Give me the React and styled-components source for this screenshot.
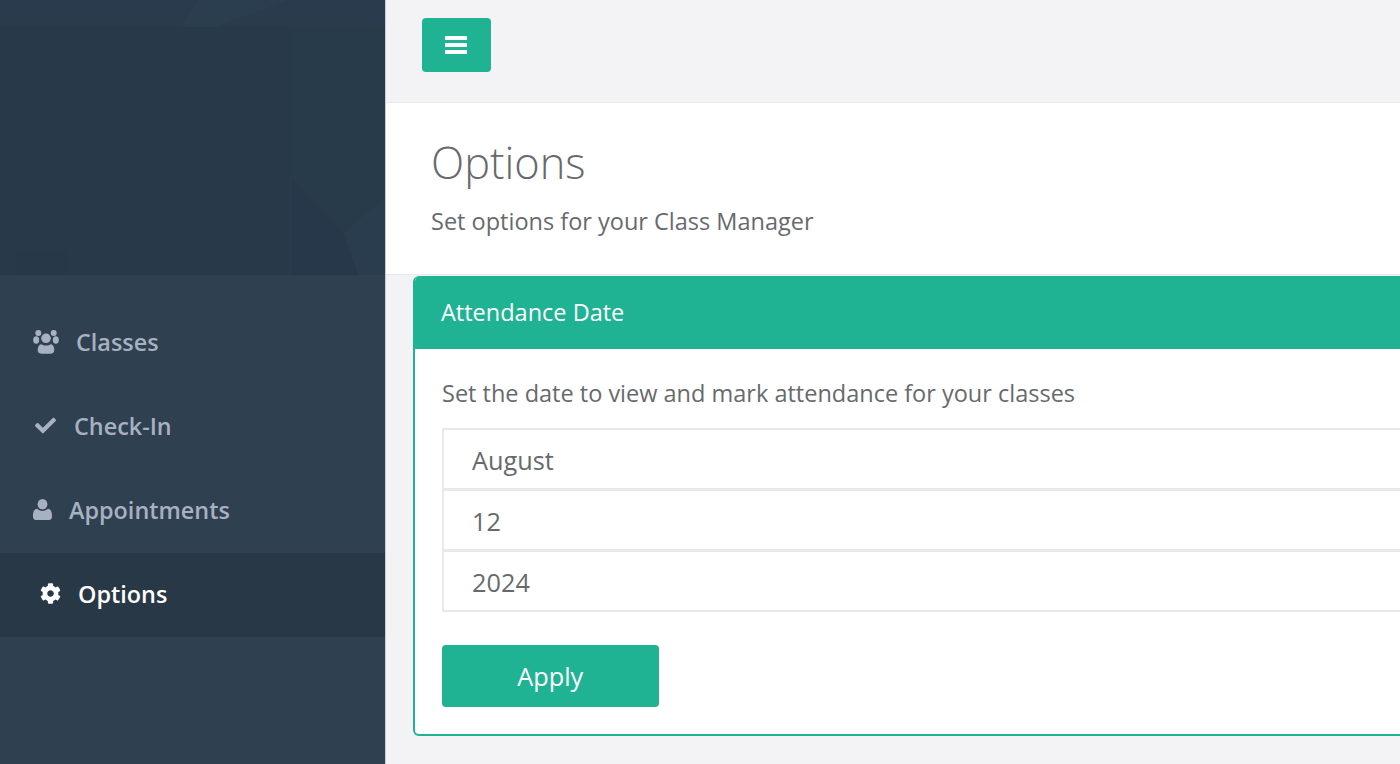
import React from "react";
import styled, { createGlobalStyle } from "styled-components";
import { FaCheck, FaCog } from "react-icons/fa";

const Global = createGlobalStyle`
  html, body { margin: 0; padding: 0; height: 100%; overflow: hidden; background: #f3f3f5; }
  * { box-sizing: border-box; }
  #root { height: 100%; }
`;

const Page = styled.div`
  display: flex;
  width: 1400px;
  height: 764px;
  overflow: hidden;
  font-family: "Open Sans", "Liberation Sans", sans-serif;
  color: #676a6c;
`;

const Sidebar = styled.aside`
  flex: 0 0 386px;
  background: #2f4050;
  border-right: 1px solid #c9ccd0;
`;

const Banner = styled.div`
  position: relative;
  height: 275px;
  background: #283a4a;
  overflow: hidden;
`;

const BannerArt = styled.svg`
  position: absolute;
  inset: 0;
  width: 100%;
  height: 100%;
`;

const Nav = styled.nav`
  display: flex;
  flex-direction: column;
  padding-top: 25.5px;
`;

const NavItem = styled.a`
  display: flex;
  align-items: center;
  height: 84px;
  padding-left: ${(p) => p.$pad}px;
  padding-bottom: 1.5px;
  gap: ${(p) => p.$gap}px;
  font-size: 23.4px;
  font-weight: 600;
  color: ${(p) => (p.$active ? "#ffffff" : "#a7b1c2")};
  background: ${(p) => (p.$active ? "#293846" : "transparent")};
  svg { flex: none; }
`;

const Main = styled.main`
  flex: 1;
  min-width: 0;
  display: flex;
  flex-direction: column;
`;

const TopBar = styled.header`
  height: 103px;
  padding: 18px 0 0 36px;
  background: #f3f3f5;
  border-bottom: 1px solid #e7eaec;
`;

const MenuButton = styled.button`
  display: flex;
  align-items: center;
  justify-content: center;
  width: 68.5px;
  height: 54px;
  padding: 0;
  border: 0;
  border-radius: 4px;
  background: #1fb394;
  color: #fff;
`;

const Heading = styled.section`
  height: 172px;
  padding: 31px 0 0 45px;
  background: #fff;
  border-bottom: 1px solid #e7eaec;
`;

const Title = styled.h2`
  margin: 0;
  font-size: 43.4px;
  font-weight: 300;
  line-height: 58px;
`;

const Subtitle = styled.p`
  margin: 14px 0 0;
  font-size: 23.5px;
  line-height: 30px;
`;

const Card = styled.section`
  margin: 1px -30px 0 27px;
  height: 460px;
  background: #fff;
  border: 2px solid #1fb394;
  border-top: 0;
  border-radius: 6px;
  overflow: hidden;
`;

const CardHeader = styled.div`
  display: flex;
  align-items: center;
  height: 73px;
  padding: 0 0 2px 26px;
  background: #1fb394;
  color: #fff;
  font-size: 23.5px;
`;

const CardBody = styled.div`
  padding: 29px 0 0 27px;
`;

const Prompt = styled.p`
  margin: 0 0 20px;
  font-size: 23.5px;
  line-height: 30px;
`;

const Field = styled.div`
  display: flex;
  align-items: center;
  height: 62px;
  margin-top: ${(p) => (p.$first ? 0 : -1)}px;
  padding: 2px 0 0 28px;
  background: #fff;
  border: 2px solid #e8e9eb;
  font-size: 25.3px;
`;

const Apply = styled.button`
  display: block;
  width: 216.5px;
  height: 62px;
  margin-top: 33px;
  padding: 0;
  border: 0;
  border-radius: 4px;
  background: #1fb394;
  color: #fff;
  font-family: inherit;
  font-size: 25.3px;
`;

const UsersIcon = () => (
  <svg width="26" height="24" viewBox="0 0 26 24" fill="currentColor" aria-hidden="true">
    <circle cx="5.300" cy="3" r="3" />
    <circle cx="20.700" cy="3" r="3" />
    <ellipse cx="3.200" cy="10" rx="3" ry="3.800" />
    <ellipse cx="22.800" cy="10" rx="3" ry="3.800" />
    <circle cx="13" cy="8.300" r="4.800" />
    <path d="M8.200 14.200c1.300.9 3 1.400 4.800 1.400s3.500-.5 4.800-1.400c2.300.3 3.500 2.800 3.500 5.900 0 2.300-1.300 3.600-3.500 3.600H8.200c-2.200 0-3.500-1.300-3.500-3.600 0-3.100 1.200-5.600 3.500-5.900z" />
  </svg>
);

const UserIcon = () => (
  <svg width="19" height="21" viewBox="0 0 19 21" fill="currentColor" aria-hidden="true">
    <ellipse cx="9.500" cy="5.200" rx="4.900" ry="5.200" />
    <path d="M4.300 9.800c1.300 1.300 3.100 2.100 5.200 2.100s3.900-.8 5.200-2.100c2.900.2 4.300 2.900 4.300 7v1.300c0 1.700-1.200 2.900-2.800 2.900H2.800C1.200 21 0 19.800 0 18.100v-1.300c0-4.100 1.400-6.800 4.300-7z" />
  </svg>
);

const BarsIcon = () => (
  <svg width="22" height="18" viewBox="0 0 22 18" fill="currentColor" aria-hidden="true">
    <rect y="0" width="22" height="4" rx="0.5" />
    <rect y="7" width="22" height="4" rx="0.5" />
    <rect y="14" width="22" height="4" rx="0.5" />
  </svg>
);

const items = [
  { label: "Classes", icon: <UsersIcon />, pad: 33, gap: 17 },
  { label: "Check-In", icon: <FaCheck size={21} />, pad: 35, gap: 18 },
  { label: "Appointments", icon: <UserIcon />, pad: 33, gap: 17 },
  { label: "Options", icon: <FaCog size={21} />, pad: 40, gap: 17, active: true },
];

export default function App() {
  return (
    <Page>
      <Global />
      <Sidebar>
        <Banner>
          <BannerArt viewBox="0 0 385 275" preserveAspectRatio="none">
            <rect x="0" y="0" width="385" height="27" fill="#293b4c" />
            <polygon points="180,27 198,0 290,0 215,27" fill="#2a3e50" />
            <rect x="290" y="27" width="95" height="248" fill="#283b4b" />
            <polygon points="343,233 385,198 385,275 358,275" fill="#2a3d4e" />
            <polygon points="292,178 343,233 358,275 292,275" fill="#27384a" />
            <rect x="15" y="250" width="55" height="25" fill="#273848" />
          </BannerArt>
        </Banner>
        <Nav>
          {items.map(({ label, icon, pad, gap, active }) => (
            <NavItem key={label} $pad={pad} $gap={gap} $active={active}>
              {icon}
              {label}
            </NavItem>
          ))}
        </Nav>
      </Sidebar>
      <Main>
        <TopBar>
          <MenuButton aria-label="Menu">
            <BarsIcon />
          </MenuButton>
        </TopBar>
        <Heading>
          <Title>Options</Title>
          <Subtitle>Set options for your Class Manager</Subtitle>
        </Heading>
        <Card>
          <CardHeader>Attendance Date</CardHeader>
          <CardBody>
            <Prompt>Set the date to view and mark attendance for your classes</Prompt>
            <Field $first>August</Field>
            <Field>12</Field>
            <Field>2024</Field>
            <Apply>Apply</Apply>
          </CardBody>
        </Card>
      </Main>
    </Page>
  );
}
